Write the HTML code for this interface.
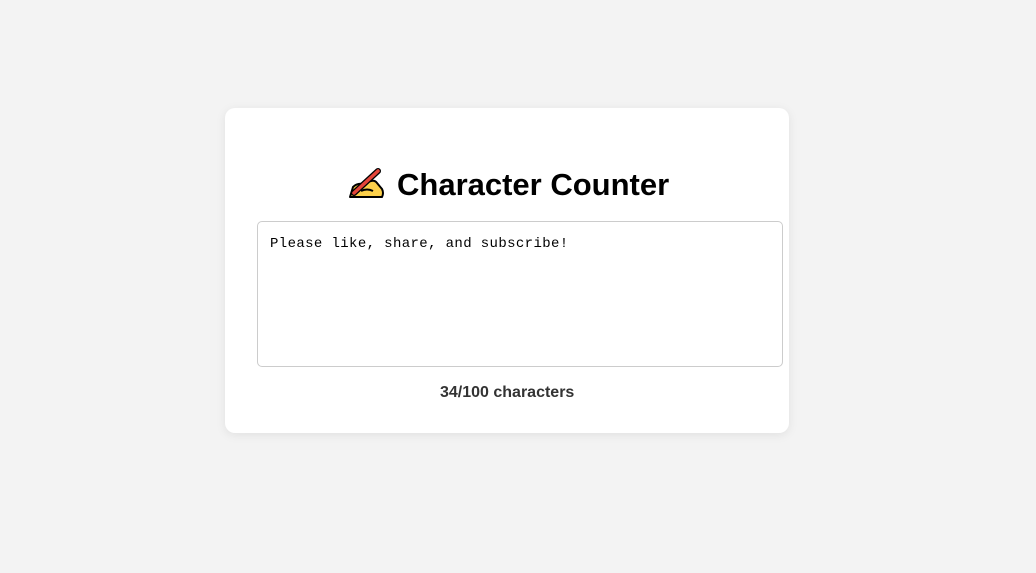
<!DOCTYPE html>
<html><head><style>
body{margin:0;background:#f3f3f3;width:1036px;height:573px;font-family:"Liberation Sans",sans-serif;}
.card{position:absolute;left:225px;top:108px;width:564px;height:325px;background:#fff;border-radius:10px;box-shadow:0 2px 10px rgba(0,0,0,.08);}
h1{position:absolute;left:347px;top:166px;margin:0;white-space:nowrap;font-size:31px;font-weight:bold;color:#000;line-height:38px;}
h1 svg{vertical-align:-6px;margin-right:12px}
.ta{position:absolute;left:257px;top:221px;border:1px solid #cccccc;border-radius:5px;box-sizing:border-box;width:526px;height:146px;}
.ta span{position:absolute;left:12px;top:14px;font-family:"Liberation Mono",monospace;font-size:14px;letter-spacing:0.38px;color:#000;}
.cnt{position:absolute;left:440px;top:384px;white-space:nowrap;font-weight:bold;font-size:16px;color:#333;}
</style></head><body>
<div class="card"></div>
<h1><svg width="38" height="34" viewBox="0 0 38 34"><path d="M3 30 L6 20 Q10 16 16 17 L24 14 Q28 13 30 16 L35 22 Q37 26 35 30 Z" fill="#fcd04b" stroke="#000" stroke-width="2" stroke-linejoin="round"/><path d="M7 26 L31 4" stroke="#000" stroke-width="6" stroke-linecap="round"/><path d="M7 26 L31 4" stroke="#e5453a" stroke-width="3.5" stroke-linecap="round"/><path d="M14 24 Q20 21 26 24" stroke="#000" stroke-width="2" fill="none"/></svg>Character Counter</h1>
<div class="ta"><span>Please like, share, and subscribe!</span></div>
<div class="cnt">34/100 characters</div>
</body></html>
